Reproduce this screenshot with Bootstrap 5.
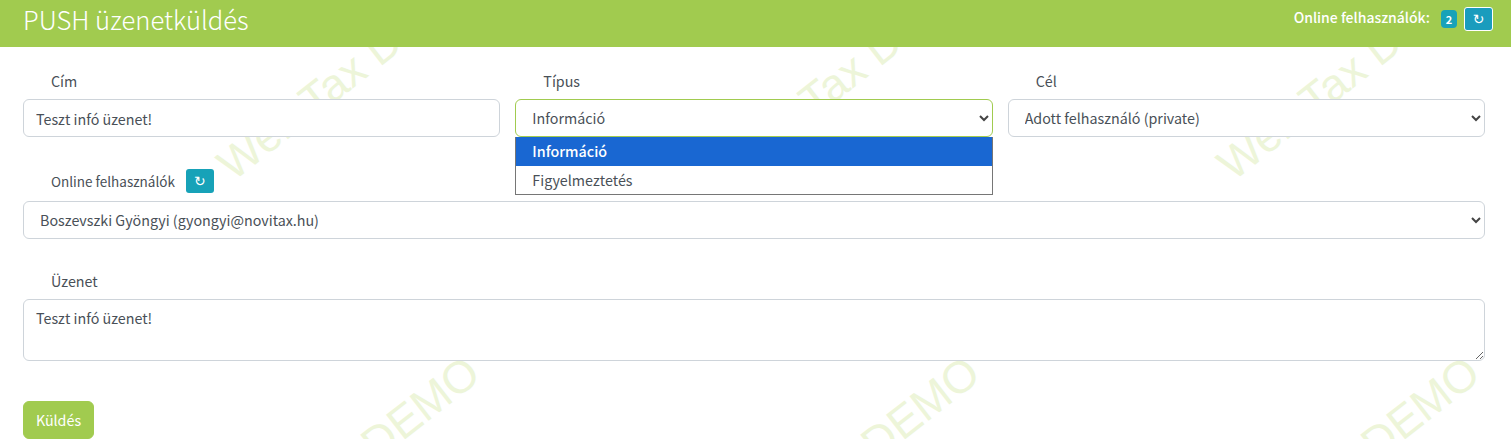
<!DOCTYPE html>
<html lang="hu">
<head>
<meta charset="utf-8">
<title>PUSH üzenetküldés</title>
<link rel="stylesheet" href="https://cdn.jsdelivr.net/npm/bootstrap@5.3.0/dist/css/bootstrap.min.css">
<style>
html,body{background:#fff;}
body{font-family:"Noto Sans CJK JP","Lato",sans-serif;color:#495057;font-size:14.3px;}
.page-wrap{position:relative;height:439px;overflow:hidden;}
.wm-layer{position:absolute;inset:0;z-index:0;pointer-events:none;}
.wm-text{position:absolute;font:400 45px/1 "Liberation Sans",sans-serif;color:#edf5d9;white-space:nowrap;transform:rotate(-38deg);transform-origin:0 38px;}
.top-bar{position:relative;z-index:2;height:47px;background:#a1cb4f;color:#fff;padding:0 18px 0 23px;}
.top-title{font-size:25.6px;font-weight:300;margin:0;line-height:37px;}
.top-online{font-size:14px;font-weight:500;padding-top:5px;}
.top-online-text{line-height:24px;}
.tone-info{background:#17a2b8;color:#fff;}
.count-pill{font-size:11px;font-weight:700;width:16px;height:18px;border-radius:4px;display:inline-flex;align-items:center;justify-content:center;margin:5px 7px 0 11px;}
.reload-btn{width:29px;height:24px;padding:0;font:400 14px/1 "DejaVu Sans",sans-serif;border-radius:3px;display:inline-flex;align-items:center;justify-content:center;}
.reload-btn:hover{background:#17a2b8;color:#fff;}
.reload-head{border:1px solid #fff;background:#1a9cbd;color:#fff;margin-top:2px;}
.reload-form{border:0;width:28px;}
.form-body{position:relative;z-index:1;padding:0 26px 0 23px;}
.form-row{--bs-gutter-x:15px;--bs-gutter-y:0;}
.fld-label{padding:0 0 10px 28px;height:52px;display:flex;align-items:flex-end;margin:0;line-height:16px;}
.fld-small{font-size:13.5px;gap:11px;height:64px;padding:32px 0 8px 28px;align-items:center;}
.fld-tall{height:60px;}
.form-control,.form-select{color:#495057;font-size:14.3px;border-color:#ced4da;line-height:24px;}
.form-control{height:38px;}
textarea.form-control{height:62px;}
.form-select{height:38px;padding-left:16px;background-image:url("data:image/svg+xml,%3csvg xmlns='http://www.w3.org/2000/svg' viewBox='0 0 10 7'%3e%3cpath fill='none' stroke='%23444' stroke-width='2' d='M1 1l4 4 4-4'/%3e%3c/svg%3e");background-size:10px 7px;background-position:right 3px center;}
.form-select.sel-open{border-color:#a1cb4f;}
.drop-anchor{position:relative;}
.drop-list{display:block;position:absolute;left:0;right:0;top:38px;padding:0;margin:0;min-width:0;border:1px solid #767676;border-top:0;border-radius:0;z-index:5;background:#fff;}
.drop-list .dropdown-item{height:28.5px;padding:0 16px;line-height:28px;color:#495057;font-size:14.3px;}
.drop-list .dropdown-item.active{background:#1967d2;color:#fff;font-weight:500;}
.send-btn{background:#a1cb4f;border-color:#a1cb4f;color:#fff;font-size:14.3px;width:71px;height:38px;padding:0;margin-top:40px;display:block;line-height:24px;}
.send-btn:hover{background:#a1cb4f;border-color:#a1cb4f;color:#fff;}
</style>
</head>
<body>
<div class="page-wrap">
  <div class="wm-layer" aria-hidden="true">
    <span class="wm-text" style="left:233px;top:144px">Web Tax DEMO</span>
    <span class="wm-text" style="left:733px;top:144px">Web Tax DEMO</span>
    <span class="wm-text" style="left:1233px;top:144px">Web Tax DEMO</span>
    <span class="wm-text" style="left:230px;top:538px">Web Tax DEMO</span>
    <span class="wm-text" style="left:730px;top:538px">Web Tax DEMO</span>
    <span class="wm-text" style="left:1230px;top:538px">Web Tax DEMO</span>
  </div>
  <header class="top-bar d-flex justify-content-between align-items-start">
    <h1 class="top-title">PUSH üzenetküldés</h1>
    <div class="top-online d-flex align-items-start">
      <span class="top-online-text">Online felhasználók:</span>
      <span class="count-pill tone-info">2</span>
      <button type="button" class="btn reload-btn reload-head">↻</button>
    </div>
  </header>
  <form class="form-body">
    <div class="row form-row">
      <div class="col-4">
        <label class="fld-label" for="f1">Cím</label>
        <input id="f1" class="form-control" type="text" value="Teszt infó üzenet!">
      </div>
      <div class="col-4">
        <label class="fld-label" for="f2">Típus</label>
        <div class="drop-anchor">
          <select id="f2" class="form-select sel-open"><option>Információ</option><option>Figyelmeztetés</option></select>
          <div class="dropdown-menu drop-list">
            <div class="dropdown-item active">Információ</div>
            <div class="dropdown-item">Figyelmeztetés</div>
          </div>
        </div>
      </div>
      <div class="col-4">
        <label class="fld-label" for="f3">Cél</label>
        <select id="f3" class="form-select"><option>Adott felhasználó (private)</option></select>
      </div>
    </div>
    <label class="fld-label fld-small" for="f4">Online felhasználók
      <button type="button" class="btn reload-btn reload-form tone-info">↻</button>
    </label>
    <select id="f4" class="form-select"><option>Boszevszki Gyöngyi (gyongyi@novitax.hu)</option></select>
    <label class="fld-label fld-tall" for="f5">Üzenet</label>
    <textarea id="f5" class="form-control">Teszt infó üzenet!</textarea>
    <button type="button" class="btn send-btn">Küldés</button>
  </form>
</div>
<script src="https://cdn.jsdelivr.net/npm/bootstrap@5.3.0/dist/js/bootstrap.bundle.min.js"></script>
</body>
</html>
